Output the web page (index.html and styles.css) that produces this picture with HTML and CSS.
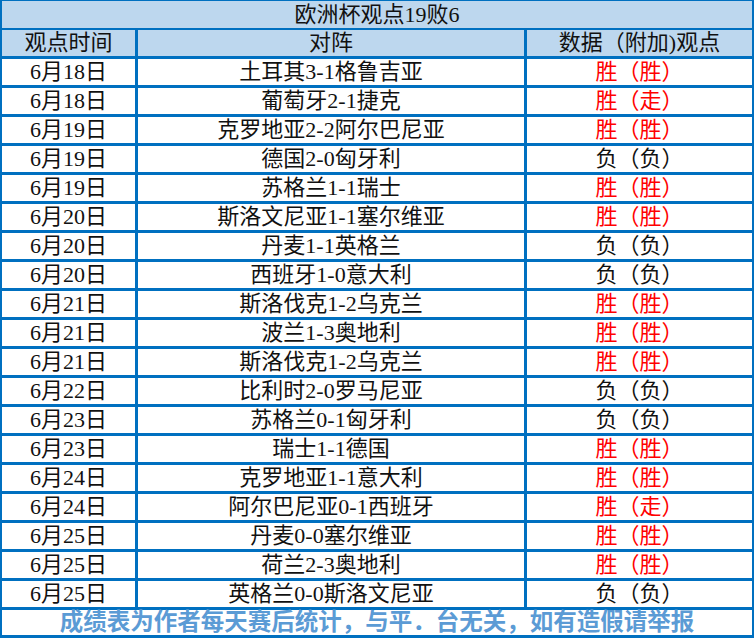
FILE: index.html
```html
<!DOCTYPE html>
<html lang="zh-CN">
<head>
<meta charset="utf-8">
<title>欧洲杯观点19败6</title>
<link rel="stylesheet" href="styles.css">
</head>
<body>
<div class="sheet">
  <div class="cell title">欧洲杯观点19败6</div>
  <div class="cell head">观点时间</div>
  <div class="cell head">对阵</div>
  <div class="cell head">数据（附加)观点</div>

  <div class="cell">6月18日</div><div class="cell">土耳其3-1格鲁吉亚</div><div class="cell win">胜（胜）</div>
  <div class="cell">6月18日</div><div class="cell">葡萄牙2-1捷克</div><div class="cell win">胜（走）</div>
  <div class="cell">6月19日</div><div class="cell">克罗地亚2-2阿尔巴尼亚</div><div class="cell win">胜（胜）</div>
  <div class="cell">6月19日</div><div class="cell">德国2-0匈牙利</div><div class="cell">负（负）</div>
  <div class="cell">6月19日</div><div class="cell">苏格兰1-1瑞士</div><div class="cell win">胜（胜）</div>
  <div class="cell">6月20日</div><div class="cell">斯洛文尼亚1-1塞尔维亚</div><div class="cell win">胜（胜）</div>
  <div class="cell">6月20日</div><div class="cell">丹麦1-1英格兰</div><div class="cell">负（负）</div>
  <div class="cell">6月20日</div><div class="cell">西班牙1-0意大利</div><div class="cell">负（负）</div>
  <div class="cell">6月21日</div><div class="cell">斯洛伐克1-2乌克兰</div><div class="cell win">胜（胜）</div>
  <div class="cell">6月21日</div><div class="cell">波兰1-3奥地利</div><div class="cell win">胜（胜）</div>
  <div class="cell">6月21日</div><div class="cell">斯洛伐克1-2乌克兰</div><div class="cell win">胜（胜）</div>
  <div class="cell">6月22日</div><div class="cell">比利时2-0罗马尼亚</div><div class="cell">负（负）</div>
  <div class="cell">6月23日</div><div class="cell">苏格兰0-1匈牙利</div><div class="cell">负（负）</div>
  <div class="cell">6月23日</div><div class="cell">瑞士1-1德国</div><div class="cell win">胜（胜）</div>
  <div class="cell">6月24日</div><div class="cell">克罗地亚1-1意大利</div><div class="cell win">胜（胜）</div>
  <div class="cell">6月24日</div><div class="cell">阿尔巴尼亚0-1西班牙</div><div class="cell win">胜（走）</div>
  <div class="cell">6月25日</div><div class="cell">丹麦0-0塞尔维亚</div><div class="cell win">胜（胜）</div>
  <div class="cell">6月25日</div><div class="cell">荷兰2-3奥地利</div><div class="cell win">胜（胜）</div>
  <div class="cell">6月25日</div><div class="cell">英格兰0-0斯洛文尼亚</div><div class="cell">负（负）</div>

  <div class="cell foot">成绩表为作者每天赛后统计，与平．台无关，如有造假请举报</div>
</div>
</body>
</html>
```

FILE: styles.css
```css
html, body {
  margin: 0;
  padding: 0;
  background: #ffffff;
}

.sheet {
  width: 754px;
  box-sizing: border-box;
  display: grid;
  grid-template-columns: 133px 386px 225px;
  grid-auto-rows: 26px;
  gap: 3px;
  padding: 1px 2px 2px 2px;
  background: #0070c0;
  font-family: "Liberation Serif", "Noto Sans CJK SC", serif;
  font-size: 22px;
  color: #111111;
}

.cell {
  background: #ffffff;
  display: flex;
  align-items: center;
  justify-content: center;
  line-height: 1;
  white-space: nowrap;
}

.title {
  grid-column: 1 / 4;
  background: #bdd7ee;
  height: 27px;
  align-self: start;
}

.sheet > .title { margin-bottom: 0; }

.head {
  background: #bdd7ee;
}

.win {
  color: #ff0000;
}

.foot {
  grid-column: 1 / 4;
  height: 25px;
  color: #5b9bd5;
  font-weight: bold;
  font-size: 23.5px;
}
```
